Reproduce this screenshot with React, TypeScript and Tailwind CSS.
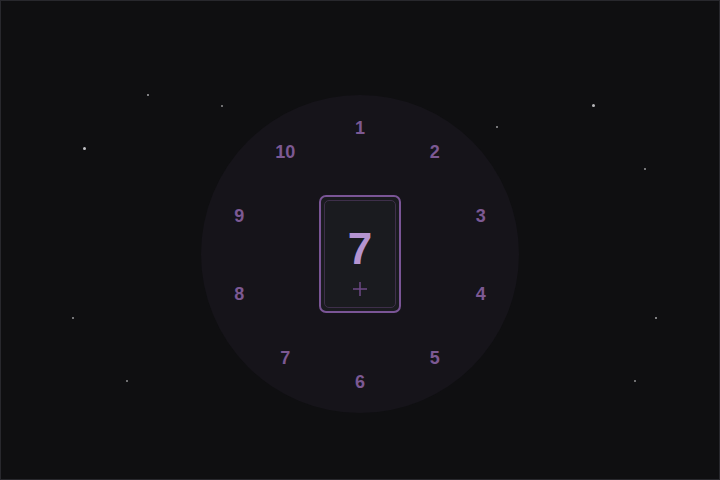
const NUMBERS = Array.from({ length: 10 }, (_, i) => i + 1)

// scattered background dots: [x, y, size, opacity]
const STARS: [number, number, number, number][] = [
  [148, 95, 2, 0.7],
  [222, 106, 2, 0.6],
  [84, 148, 3, 0.85],
  [73, 318, 2, 0.65],
  [127, 381, 2, 0.6],
  [593, 105, 3, 0.8],
  [497, 127, 2, 0.65],
  [645, 169, 2, 0.65],
  [656, 318, 2, 0.7],
  [635, 381, 2, 0.6],
]

const RADIUS = 127
const SIZE = 318

export default function App() {
  return (
    <div
      className="relative w-[720px] h-[480px] bg-[#0f0f11] border border-[#28282d] overflow-hidden flex justify-center pt-[94px]"
      style={{ fontFamily: '"Liberation Sans", Arial, sans-serif' }}
    >
      {STARS.map(([x, y, s, o], i) => (
        <span
          key={i}
          className="absolute rounded-full bg-[#e2e2e6]"
          style={{ left: x - s / 2 - 1, top: y - s / 2 - 1, width: s, height: s, opacity: o }}
        />
      ))}

      <div className="relative w-[318px] h-[318px] rounded-full bg-[#16141a] flex items-center justify-center">
        {NUMBERS.map((n, i) => {
          const a = (i * 36 * Math.PI) / 180
          const x = SIZE / 2 + RADIUS * Math.sin(a)
          const y = SIZE / 2 - RADIUS * Math.cos(a) + 1
          return (
            <span
              key={n}
              className="absolute -translate-x-1/2 -translate-y-1/2 text-[18px] font-bold leading-none text-[#7c5993]"
              style={{ left: x, top: y }}
            >
              {n}
            </span>
          )
        })}

        <div className="w-[82px] h-[118px] rounded-[7px] border-2 border-[#7a5596] bg-[#1a1b1f] p-[3px]">
          <div className="w-full h-full rounded-[5px] border border-[#3e2f4a] flex flex-col items-center pt-[26px]">
            <span className="text-[44px] font-bold leading-none text-[#b594d0]">7</span>
            <svg className="mt-[10px]" width="16" height="16" viewBox="0 0 16 16">
              <path d="M8 1v14M1 8h14" stroke="#6d4a86" strokeWidth="1.5" />
            </svg>
          </div>
        </div>
      </div>
    </div>
  )
}
